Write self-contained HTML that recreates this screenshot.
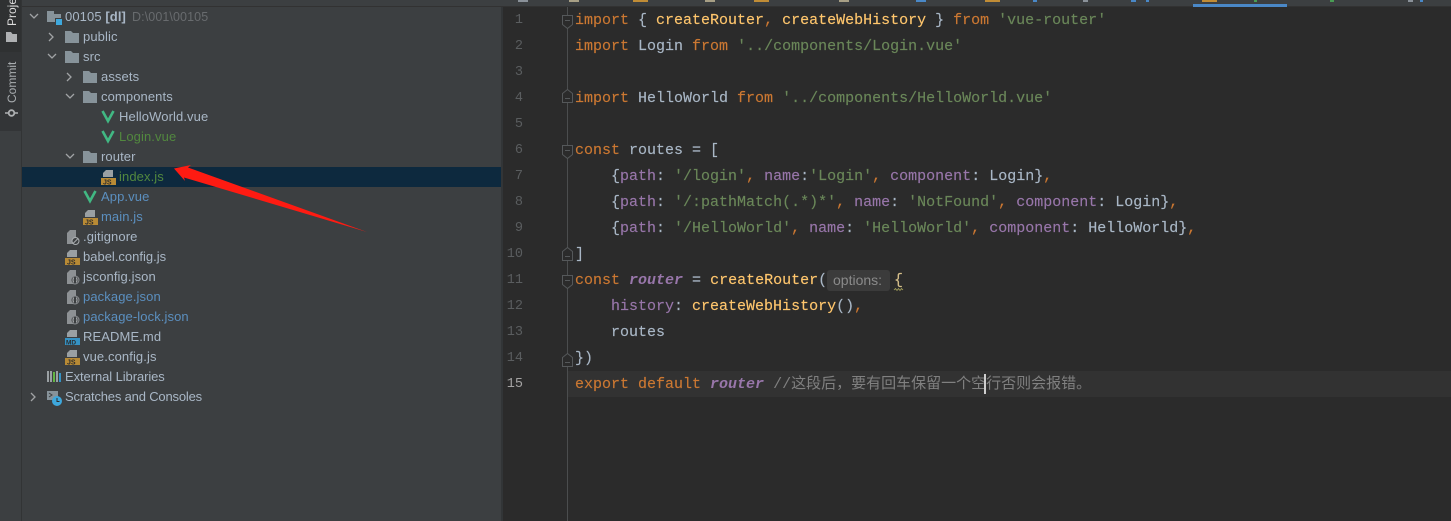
<!DOCTYPE html>
<html><head><meta charset="utf-8">
<style>
html,body{margin:0;padding:0;background:#3c3f41}
#r{position:relative;width:1451px;height:521px;overflow:hidden;background:#3c3f41;font-family:"Liberation Sans","Noto Sans CJK SC",sans-serif}
.a{position:absolute}
.t{position:absolute;font-size:13px;line-height:20px;height:20px;white-space:nowrap;color:#a9b7c6;letter-spacing:.1px}
.c{position:absolute;left:575px;height:26px;line-height:26px;font-family:"Liberation Mono","Noto Sans CJK SC",monospace;font-size:15px;white-space:pre;color:#a9b7c6;font-weight:400;-webkit-text-stroke:.15px}
.n{position:absolute;left:503px;width:20px;text-align:right;height:26px;line-height:26px;font-family:"Liberation Mono",monospace;font-size:13.5px;color:#5a5d5f}
.k{color:#cc7832}.f{color:#ffc66d}.s{color:#6a8759}.p{color:#9876aa}.pi{color:#9876aa;font-style:italic;font-weight:700;-webkit-text-stroke:0}.g{color:#808080;-webkit-text-stroke:0}
.v{position:absolute;height:14px;line-height:14px;font-size:12px;white-space:nowrap;transform:rotate(-90deg);transform-origin:0 0}
svg{position:absolute;overflow:visible}
</style></head><body><div id="r">

<!-- top bar -->
<div class="a" style="left:0;top:0;width:1451px;height:7px;background:#3c3f41"></div>
<div class="a" style="left:0;top:6px;width:1451px;height:1px;background:#323232"></div>
<div class="a" style="left:1193px;top:4px;width:94px;height:3px;background:#4a88c7"></div>
<div class="a" style="left:633px;top:0;width:15px;height:1.5px;background:#c08c36"></div>
<div class="a" style="left:754px;top:0;width:15px;height:1.5px;background:#c08c36"></div>
<div class="a" style="left:985px;top:0;width:15px;height:1.5px;background:#c08c36"></div>
<div class="a" style="left:1202px;top:0;width:15px;height:1.5px;background:#c08c36"></div>
<div class="a" style="left:1330px;top:0;width:4px;height:1.5px;background:#499c54"></div>
<div class="a" style="left:1254px;top:0;width:3px;height:1.5px;background:#499c54"></div>
<div class="a" style="left:518px;top:0;width:10px;height:1.5px;background:#8a9199"></div>
<div class="a" style="left:569px;top:0;width:10px;height:1.5px;background:#a79f85"></div>
<div class="a" style="left:705px;top:0;width:10px;height:1.5px;background:#a79f85"></div>
<div class="a" style="left:839px;top:0;width:10px;height:1.5px;background:#a79f85"></div>
<div class="a" style="left:916px;top:0;width:10px;height:1.5px;background:#4a88c7"></div>
<div class="a" style="left:1033px;top:0;width:4px;height:1.5px;background:#4a88c7"></div>
<div class="a" style="left:1083px;top:0;width:5px;height:1.5px;background:#8a9199"></div>
<div class="a" style="left:1131px;top:0;width:5px;height:1.5px;background:#4a88c7"></div>
<div class="a" style="left:1146px;top:0;width:3px;height:1.5px;background:#4a88c7"></div>
<div class="a" style="left:1408px;top:0;width:5px;height:1.5px;background:#8a9199"></div>
<div class="a" style="left:1420px;top:0;width:3px;height:1.5px;background:#4a88c7"></div>

<!-- left stripe -->
<div class="a" style="left:0;top:0;width:22px;height:521px;background:#3c3f41"></div>
<div class="a" style="left:0;top:0;width:22px;height:52px;background:#2f3132"></div>
<div class="a" style="left:0;top:52px;width:22px;height:79px;background:#333537"></div>
<div class="a" style="left:21px;top:0;width:1px;height:521px;background:#323435"></div>
<div class="v" style="left:5px;top:26px;color:#dcdcdc">Project</div>
<svg style="left:6px;top:31px" width="11" height="11"><path d="M0 1h5l1.500 2H11v8H0z" fill="#afb1b3"/></svg>
<div class="v" style="left:5px;top:103px;color:#a9adb0">Commit</div>
<svg style="left:5px;top:107px" width="13" height="12"><circle cx="6.500" cy="6" r="2.800" fill="none" stroke="#afb1b3" stroke-width="1.800"/><path d="M0 6h3.500M9.500 6H13" stroke="#afb1b3" stroke-width="1.500"/></svg>

<!-- selected row -->
<div class="a" style="left:22px;top:167px;width:479px;height:20px;background:#0d293e"></div>

<!-- tree arrows -->
<svg style="left:0;top:0" width="100" height="420" fill="none" stroke="#a0a3a5" stroke-width="1.300">
<path d="M30 14l4 4 4-4"/>
<path d="M49 33l4 4-4 4"/>
<path d="M48 54l4 4 4-4"/>
<path d="M67 73l4 4-4 4"/>
<path d="M66 94l4 4 4-4"/>
<path d="M66 154l4 4 4-4"/>
<path d="M31 393l4 4-4 4"/>
</svg>

<!-- folders -->
<svg style="left:0;top:0" width="120" height="420" fill="#87939a">
<path d="M47 11h7v3h7v8H47z"/>
<path d="M65 31h6l2 2h6v10H65z"/>
<path d="M65 51h6l2 2h6v10H65z"/>
<path d="M83 71h6l2 2h6v10H83z"/>
<path d="M83 91h6l2 2h6v10H83z"/>
<path d="M83 151h6l2 2h6v10H83z"/>
</svg>
<div class="a" style="left:55px;top:18px;width:8px;height:8px;background:#3c3f41"></div>
<div class="a" style="left:56px;top:19px;width:6px;height:6px;background:#3ea8dd"></div>

<!-- vue icons -->
<svg style="left:0;top:0" width="120" height="210" fill="none" stroke="#41b883" stroke-width="2.600">
<path d="M102.500 111l5.500 10 5.500-10"/>
<path d="M102.500 131l5.500 10 5.500-10"/>
<path d="M84.500 191l5.500 10 5.500-10"/>
</svg>

<!-- js icons -->
<svg style="left:0;top:0" width="120" height="380">
<path d="M106 170h7v7h-10v-4z" fill="#9aa0a3"/><rect x="101" y="178" width="15" height="7" fill="#b88a35"/><text x="103" y="184.500" font-size="7" font-family="Liberation Sans" font-weight="700" fill="#2b2b2b">JS</text>
<path d="M88 210h7v7H85v-4z" fill="#9aa0a3"/><rect x="83" y="218" width="15" height="7" fill="#b88a35"/><text x="85" y="224.500" font-size="7" font-family="Liberation Sans" font-weight="700" fill="#2b2b2b">JS</text>
<path d="M70 250h7v7H67v-4z" fill="#9aa0a3"/><rect x="65" y="258" width="15" height="7" fill="#b88a35"/><text x="67" y="264.500" font-size="7" font-family="Liberation Sans" font-weight="700" fill="#2b2b2b">JS</text>
<path d="M70 350h7v7H67v-4z" fill="#9aa0a3"/><rect x="65" y="358" width="15" height="7" fill="#b88a35"/><text x="67" y="364.500" font-size="7" font-family="Liberation Sans" font-weight="700" fill="#2b2b2b">JS</text>
<path d="M70 330h7v7H67v-4z" fill="#9aa0a3"/><rect x="65" y="338" width="15" height="7" fill="#3592c4"/><text x="66" y="344.500" font-size="6.500" font-family="Liberation Sans" font-weight="700" fill="#2b2b2b">MD</text>
<!-- gitignore -->
<path d="M70 230h6v14H67v-11z" fill="#8d9194"/><circle cx="75.500" cy="241" r="3.500" fill="#3c3f41" stroke="#a9adb0" stroke-width="1"/><path d="M73 243.500l5-5" stroke="#a9adb0"/>
<!-- json -->
<g fill="#8d9194"><path d="M70 270h6v14H67v-11z"/><path d="M70 290h6v14H67v-11z"/><path d="M70 310h6v14H67v-11z"/></g>
<g fill="#3c3f41" stroke="#8d9194" stroke-width="1"><circle cx="75" cy="280" r="4"/><circle cx="75" cy="300" r="4"/><circle cx="75" cy="320" r="4"/></g>
<g fill="none" stroke="#c0c3c5" stroke-width=".9"><path d="M73.500 277.500q-1 2.500 0 5M76.500 277.500q1 2.500 0 5"/><path d="M73.500 297.500q-1 2.500 0 5M76.500 297.500q1 2.500 0 5"/><path d="M73.500 317.500q-1 2.500 0 5M76.500 317.500q1 2.500 0 5"/></g>
<!-- ext libs -->
<rect x="47" y="371" width="2" height="11" fill="#9aa0a3"/><rect x="50" y="371" width="2" height="11" fill="#9aa0a3"/><rect x="53" y="372" width="2" height="10" fill="#62b543"/><rect x="56" y="371" width="2" height="11" fill="#9aa0a3"/><rect x="59" y="373" width="2" height="9" fill="#3592c4"/>
<!-- scratches -->
<rect x="47" y="391" width="11" height="9" fill="#87939a"/><path d="M49 393l3 2-3 2" fill="none" stroke="#3c3f41"/>
<circle cx="57" cy="401" r="5" fill="#3ea8dd"/><path d="M57 398v3.500h2.500" fill="none" stroke="#2b2b2b" stroke-width="1"/>
</svg>

<!-- tree text -->
<div class="t" style="left:65px;top:7px">00105 <b style="font-weight:700">[dl]</b><span style="color:#686b6e;margin-left:6px;font-size:12.500px">D:\001\00105</span></div>
<div class="t" style="left:83px;top:27px">public</div>
<div class="t" style="left:83px;top:47px">src</div>
<div class="t" style="left:101px;top:67px">assets</div>
<div class="t" style="left:101px;top:87px">components</div>
<div class="t" style="left:119px;top:107px">HelloWorld.vue</div>
<div class="t" style="left:119px;top:127px;color:#52883f">Login.vue</div>
<div class="t" style="left:101px;top:147px">router</div>
<div class="t" style="left:119px;top:167px;color:#52883f">index.js</div>
<div class="t" style="left:101px;top:187px;color:#5b8fbf">App.vue</div>
<div class="t" style="left:101px;top:207px;color:#5b8fbf">main.js</div>
<div class="t" style="left:83px;top:227px">.gitignore</div>
<div class="t" style="left:83px;top:247px;letter-spacing:0">babel.config.js</div>
<div class="t" style="left:83px;top:267px">jsconfig.json</div>
<div class="t" style="left:83px;top:287px;color:#5b8fbf">package.json</div>
<div class="t" style="left:83px;top:307px;color:#5b8fbf">package-lock.json</div>
<div class="t" style="left:83px;top:327px">README.md</div>
<div class="t" style="left:83px;top:347px">vue.config.js</div>
<div class="t" style="left:65px;top:367px;letter-spacing:-.08px">External Libraries</div>
<div class="t" style="left:65px;top:387px;letter-spacing:-.18px">Scratches and Consoles</div>

<!-- arrow -->
<svg style="left:0;top:0" width="500" height="300"><path d="M174 168.500L191 165 188 167.500 367 232 184 177.500 185 181z" fill="#fe1b12"/></svg>

<!-- editor -->
<div class="a" style="left:501px;top:7px;width:950px;height:514px;background:#2b2b2b"></div>
<div class="a" style="left:501px;top:7px;width:2px;height:514px;background:#323537"></div>
<div class="a" style="left:567px;top:371px;width:884px;height:26px;background:#323232"></div>
<div class="a" style="left:567px;top:7px;width:1px;height:514px;background:#4b4d4e"></div>

<div class="n" style="top:8px">1</div>
<div class="n" style="top:34px">2</div>
<div class="n" style="top:60px">3</div>
<div class="n" style="top:86px">4</div>
<div class="n" style="top:112px">5</div>
<div class="n" style="top:138px">6</div>
<div class="n" style="top:164px">7</div>
<div class="n" style="top:190px">8</div>
<div class="n" style="top:216px">9</div>
<div class="n" style="top:242px">10</div>
<div class="n" style="top:268px">11</div>
<div class="n" style="top:294px">12</div>
<div class="n" style="top:320px">13</div>
<div class="n" style="top:346px">14</div>
<div class="n" style="top:372px;color:#a4a3a3">15</div>

<!-- fold markers -->
<svg style="left:0;top:0" width="600" height="380" fill="#2b2b2b" stroke="#55585a" stroke-width="1">
<path d="M562.500 15.500h10v9l-5 4-5-4z"/><path d="M565 20.500h5"/>
<path d="M562.500 93.500l5-4 5 4v9h-10z"/><path d="M565 98.500h5"/>
<path d="M562.500 145.500h10v9l-5 4-5-4z"/><path d="M565 150.500h5"/>
<path d="M562.500 251.500l5-4 5 4v9h-10z"/><path d="M565 256.500h5"/>
<path d="M562.500 275.500h10v9l-5 4-5-4z"/><path d="M565 280.500h5"/>
<path d="M562.500 357.500l5-4 5 4v9h-10z"/><path d="M565 362.500h5"/>
</svg>

<!-- code -->
<div class="c" style="top:8px"><span class="k">import</span> { <span class="f">createRouter</span><span class="k">,</span> <span class="f">createWebHistory</span> } <span class="k">from</span> <span class="s">'vue-router'</span></div>
<div class="c" style="top:34px"><span class="k">import</span> Login <span class="k">from</span> <span class="s">'../components/Login.vue'</span></div>
<div class="c" style="top:86px"><span class="k">import</span> HelloWorld <span class="k">from</span> <span class="s">'../components/HelloWorld.vue'</span></div>
<div class="c" style="top:138px"><span class="k">const</span> routes = [</div>
<div class="c" style="top:164px">    {<span class="p">path</span>: <span class="s">'/login'</span><span class="k">,</span> <span class="p">name</span>:<span class="s">'Login'</span><span class="k">,</span> <span class="p">component</span>: Login}<span class="k">,</span></div>
<div class="c" style="top:190px">    {<span class="p">path</span>: <span class="s">'/:pathMatch(.*)*'</span><span class="k">,</span> <span class="p">name</span>: <span class="s">'NotFound'</span><span class="k">,</span> <span class="p">component</span>: Login}<span class="k">,</span></div>
<div class="c" style="top:216px">    {<span class="p">path</span>: <span class="s">'/HelloWorld'</span><span class="k">,</span> <span class="p">name</span>: <span class="s">'HelloWorld'</span><span class="k">,</span> <span class="p">component</span>: HelloWorld}<span class="k">,</span></div>
<div class="c" style="top:242px">]</div>
<div class="c" style="top:268px"><span class="k">const</span> <span class="pi">router</span> = <span class="f">createRouter</span>(</div>
<div class="a" style="left:827px;top:270px;width:63px;height:21px;background:#3b3b3b;border-radius:3px"></div>
<div class="a" style="left:833px;top:270px;height:21px;line-height:21px;font-size:14px;color:#8a8a8a;font-family:'Liberation Sans',sans-serif">options:</div>
<div class="c" style="left:894px;top:268px;color:#d6bf8a">{</div>
<svg style="left:894px;top:288px" width="10" height="4"><path d="M0 2l1.500-1.500 1.500 2 1.500-2 1.500 2 1.500-2 1.500 1.500" fill="none" stroke="#a6a25c" stroke-width=".8"/></svg>
<div class="c" style="top:294px">    <span class="p">history</span>: <span class="f">createWebHistory</span>()<span class="k">,</span></div>
<div class="c" style="top:320px">    routes</div>
<div class="c" style="top:346px">})</div>
<div class="c" style="top:372px"><span class="k">export default</span> <span class="pi">router</span> <span class="g">//这段后，要有回车保留一个空行否则会报错。</span></div>
<div class="a" style="left:984px;top:374px;width:2px;height:20px;background:#cfcfcf"></div>

</div></body></html>
